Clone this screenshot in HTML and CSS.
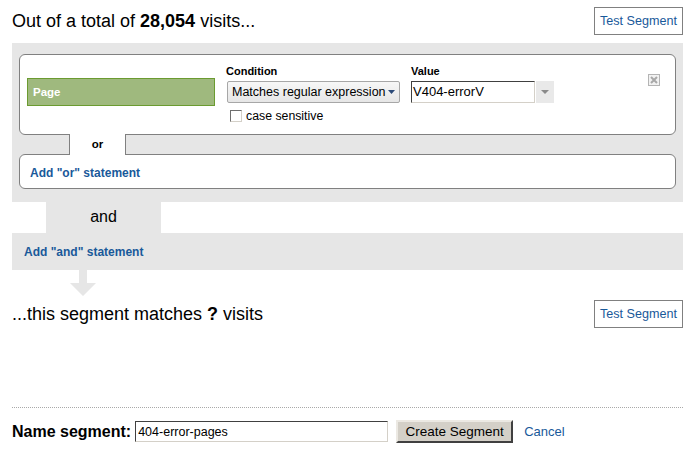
FILE: index.html
```html
<!DOCTYPE html>
<html lang="en">
<head>
    <meta charset="UTF-8">
    <meta name="viewport" content="width=device-width, initial-scale=1.0">
    <title>Advanced Segment</title>
    <link rel="stylesheet" href="styles.css">
</head>
<body>
    <div class="summary">
        <h1 class="headline">Out of a total of <b>28,054</b> visits...</h1>
        <a class="test-btn" href="#">Test Segment</a>
    </div>

    <div class="or-panel">
        <div class="cond-box">
            <div class="dim-field">Page</div>

            <div class="field field-condition">
                <div class="field-label">Condition</div>
                <div class="select">
                    <span>Matches regular expression</span>
                    <svg width="7" height="4" viewBox="0 0 7 4"><path d="M0 0h7L3.5 4z" fill="#2c4a78"/></svg>
                </div>
                <label class="check"><span class="check-box"></span>case sensitive</label>
            </div>

            <div class="field field-value">
                <div class="field-label">Value</div>
                <div class="combo">
                    <span class="combo-input">V404-errorV</span>
                    <span class="combo-btn">
                        <svg width="8" height="4" viewBox="0 0 8 4"><path d="M0 0h8L4 4z" fill="#8a8a8a"/></svg>
                    </span>
                </div>
            </div>

            <span class="remove">
                <svg width="12" height="12" viewBox="0 0 12 12">
                    <rect x="0.5" y="0.5" width="11" height="11" fill="#f2f2f2" stroke="#b4b4b4"/>
                    <path d="M3 3l6 6M9 3l-6 6" stroke="#a8a8a8" stroke-width="2"/>
                </svg>
            </span>
        </div>
        <div class="or-tab">or</div>
        <div class="or-add"><a href="#">Add "or" statement</a></div>
    </div>

    <div class="and-tab">and</div>
    <div class="and-bar"><a href="#">Add "and" statement</a></div>
    <svg class="flow-arrow" width="28" height="26" viewBox="0 0 28 26">
        <path d="M10 0h8v13h9L14 26 1 13h9z" fill="#e6e6e6"/>
    </svg>

    <div class="result">
        <h2 class="headline">...this segment matches <b>?</b> visits</h2>
        <a class="test-btn" href="#">Test Segment</a>
    </div>

    <div class="name-row">
        <label class="name-label" for="segName">Name segment:</label>
        <input class="name-input" id="segName" type="text" value="404-error-pages">
        <button class="create-btn" type="button">Create Segment</button>
        <a class="cancel" href="#">Cancel</a>
    </div>
</body>
</html>
```

FILE: styles.css
```css
:root {
    --panel: #e6e6e6;
    --line: #808080;
    --link: #19599a;
    --text: #000;
}

body {
    margin: 0;
    padding: 0 5px 0 12px;
    font-family: "Liberation Sans", Arial, sans-serif;
    color: var(--text);
    background: #fff;
}

a {
    color: var(--link);
    text-decoration: none;
}

.summary,
.result {
    display: flex;
    justify-content: space-between;
    align-items: center;
}

.summary {
    padding-top: 7px;
    margin-bottom: 8px;
}

.headline {
    margin: 0;
    font-size: 18px;
    font-weight: normal;
}

.test-btn {
    display: block;
    box-sizing: border-box;
    width: 89px;
    height: 28px;
    line-height: 26px;
    border: 1px solid var(--line);
    text-align: center;
    font-size: 12.6px;
}

/* or block */
.or-panel {
    background: var(--panel);
    padding: 11px 7px 13px;
}

.cond-box {
    display: flex;
    align-items: flex-start;
    box-sizing: border-box;
    height: 81px;
    padding: 0 15px 0 7px;
    background: #fff;
    border: 1px solid var(--line);
    border-radius: 6px;
}

.dim-field {
    box-sizing: border-box;
    width: 188px;
    height: 28px;
    margin-top: 23px;
    margin-right: 11px;
    padding-left: 5px;
    line-height: 26px;
    background: #9fb97e;
    border: 1px solid #6b9b30;
    color: #fff;
    font-size: 11.5px;
    font-weight: bold;
}

.field {
    padding-top: 10px;
}

.field-condition {
    width: 174px;
    margin-right: 11px;
}

.field-label {
    height: 13px;
    line-height: 13px;
    margin-bottom: 3px;
    font-size: 11px;
    font-weight: bold;
}

.select {
    display: flex;
    justify-content: space-between;
    align-items: center;
    box-sizing: border-box;
    width: 173px;
    height: 22px;
    margin-left: 1px;
    padding: 0 4px 0 4px;
    border: 1px solid #a7a7a7;
    border-radius: 2px;
    background: linear-gradient(#f7f7f7, #e6e6e6);
    font-size: 12.5px;
}

.check {
    display: flex;
    align-items: center;
    gap: 4px;
    margin-top: 6px;
    margin-left: 4px;
    font-size: 12.3px;
}

.check-box {
    box-sizing: border-box;
    width: 12px;
    height: 12px;
    background: #fff;
    border: 1px solid;
    border-color: #6e6e6e #d4d0c8 #d4d0c8 #6e6e6e;
}

.combo {
    display: flex;
    height: 22px;
}

.combo-input {
    box-sizing: border-box;
    width: 124px;
    padding-left: 1px;
    line-height: 20px;
    border: 1px solid;
    border-color: #404040 #d4d0c8 #d4d0c8 #404040;
    font-size: 13px;
}

.combo-btn {
    display: flex;
    align-items: center;
    justify-content: center;
    width: 18px;
    margin-left: 1px;
    background: #e9e9e9;
}

.remove {
    margin-left: auto;
    margin-top: 19px;
    line-height: 0;
}

.or-tab {
    position: relative;
    box-sizing: border-box;
    width: 57px;
    height: 21px;
    margin: -1px 0 -1px 50px;
    background: #fff;
    border-left: 1px solid var(--line);
    border-right: 1px solid var(--line);
    text-align: center;
    line-height: 20px;
    font-size: 11.5px;
    font-weight: bold;
    z-index: 1;
}

.or-add {
    box-sizing: border-box;
    height: 35px;
    padding-left: 10px;
    line-height: 33px;
    background: #fff;
    border: 1px solid var(--line);
    border-radius: 6px;
}

.or-add a,
.and-bar a {
    font-size: 12px;
    font-weight: bold;
}

/* and block */
.and-tab {
    width: 115px;
    height: 31px;
    margin-left: 34px;
    background: var(--panel);
    text-align: center;
    line-height: 30px;
    font-size: 16px;
}

.and-bar {
    height: 37px;
    padding-left: 12px;
    line-height: 36px;
    background: var(--panel);
}

.flow-arrow {
    display: block;
    margin-left: 57px;
}

.result {
    padding-top: 4px;
    padding-bottom: 79px;
    border-bottom: 1px dotted #a9a9a9;
}

.name-row {
    display: flex;
    align-items: center;
    padding-top: 12px;
}

.name-label {
    margin-right: 4px;
    font-size: 16px;
    font-weight: bold;
}

.name-input {
    box-sizing: border-box;
    width: 253px;
    height: 21px;
    margin: 0 8px 0 0;
    padding: 0 2px;
    border: 1px solid;
    border-color: #404040 #d4d0c8 #d4d0c8 #404040;
    font-family: inherit;
    font-size: 12.5px;
    color: #000;
}

.create-btn {
    box-sizing: border-box;
    width: 117px;
    height: 23px;
    padding: 0;
    background: #d4d0c8;
    border: 2px solid;
    border-color: #ece9e3 #404040 #404040 #ece9e3;
    font-family: inherit;
    font-size: 13.5px;
    color: #000;
}

.cancel {
    margin-left: 11px;
    font-size: 13px;
}
```
